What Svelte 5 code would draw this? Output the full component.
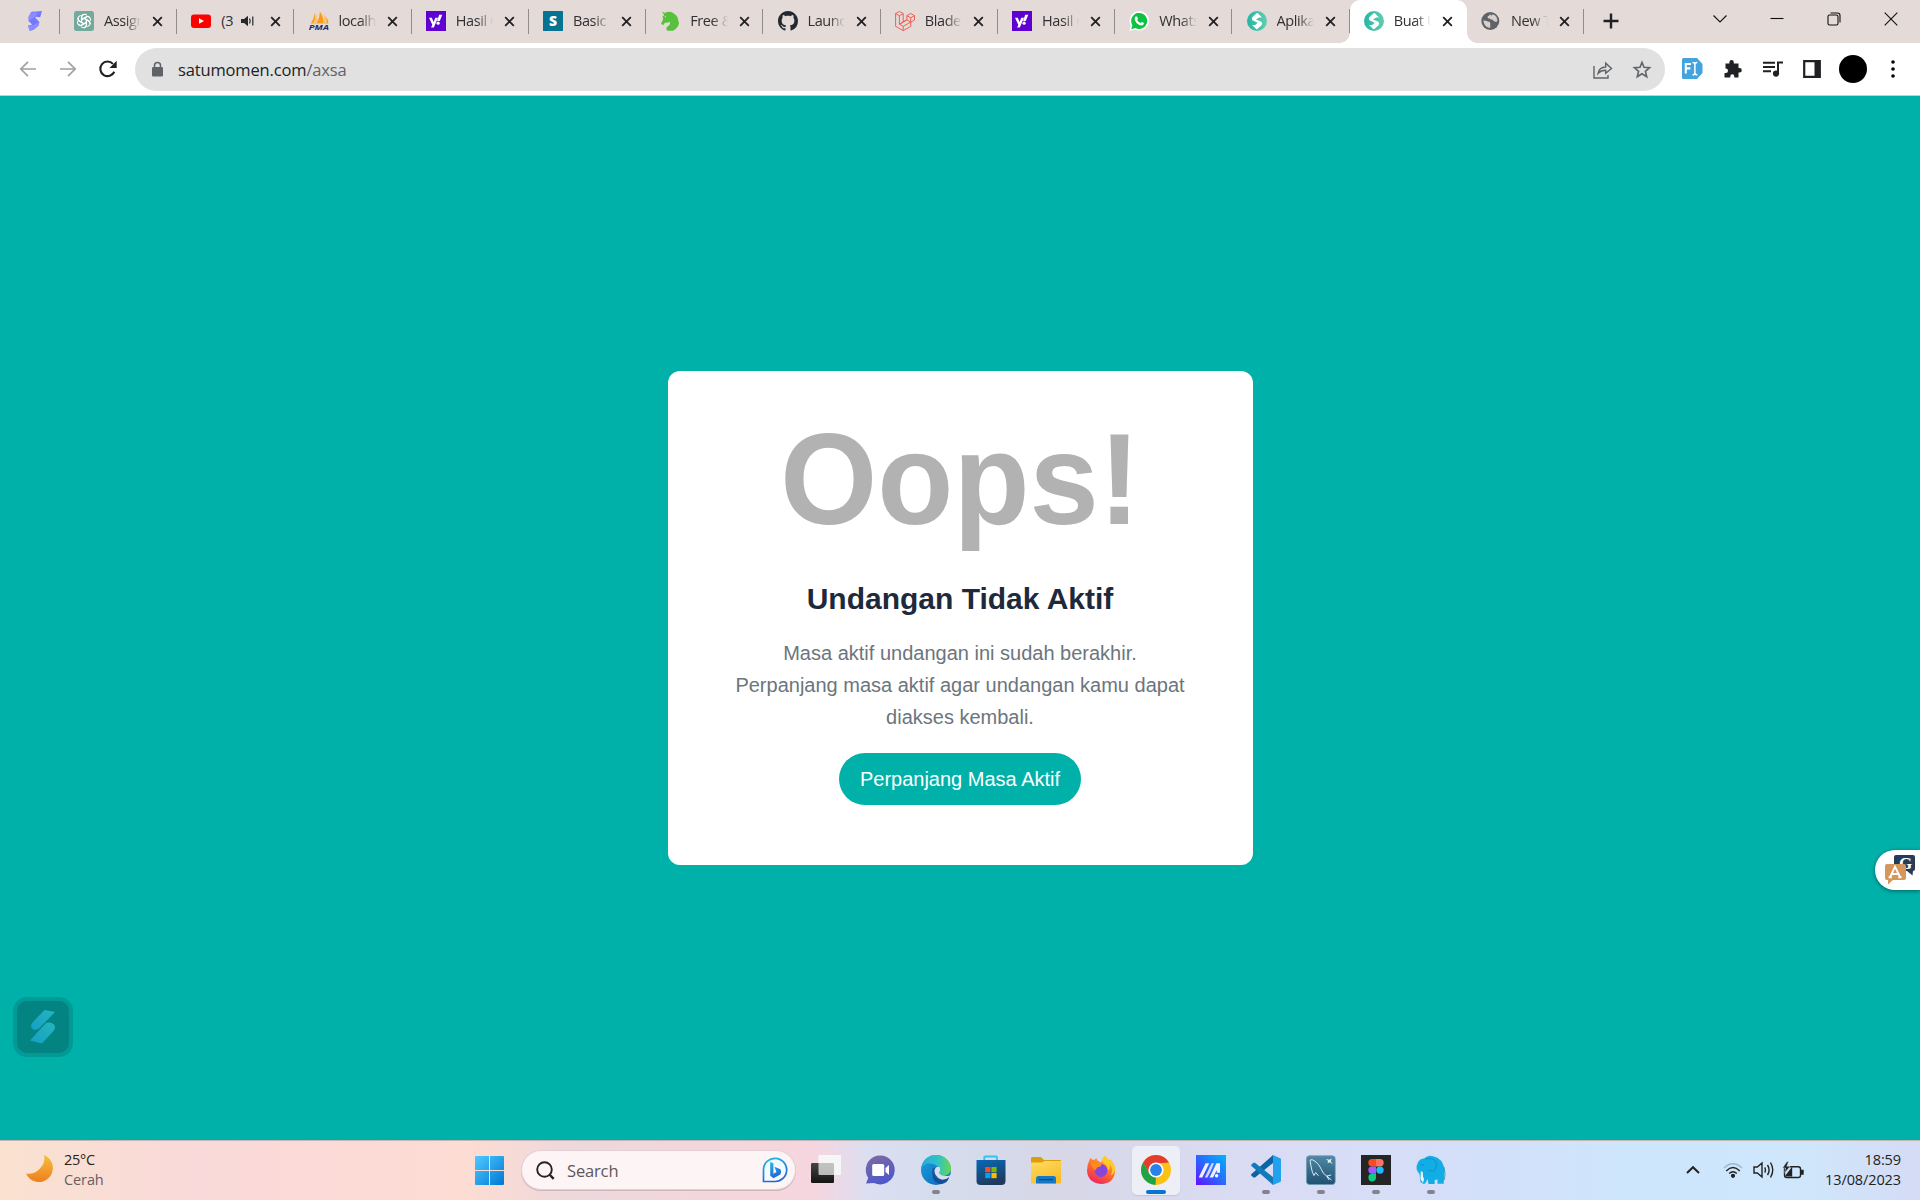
<script>
  const tabs = [
    { icon: 'gpt', title: 'Assignment' },
    { icon: 'youtube', title: '(3)', audio: true },
    { icon: 'pma', title: 'localhost' },
    { icon: 'yahoo', title: 'Hasil Cari' },
    { icon: 'sbasic', title: 'Basic ' },
    { icon: 'horse', title: 'Free & Open' },
    { icon: 'github', title: 'Launching' },
    { icon: 'laravel', title: 'Blade T' },
    { icon: 'yahoo', title: 'Hasil Cari' },
    { icon: 'whatsapp', title: 'WhatsApp' },
    { icon: 'momen', title: 'Aplikasi' },
    { icon: 'momen', title: 'Buat Undangan', active: true },
    { icon: 'globe', title: 'New Tab' }
  ];

  const apps = [
    { icon: 'taskview' },
    { icon: 'chat' },
    { icon: 'edge', running: true },
    { icon: 'store' },
    { icon: 'explorer' },
    { icon: 'firefox' },
    { icon: 'chrome', focused: true },
    { icon: 'msi' },
    { icon: 'vscode', running: true },
    { icon: 'mysql', running: true },
    { icon: 'figma', running: true },
    { icon: 'laragon', running: true }
  ];
</script>

{#snippet favicon(name)}
  <svg class="fav" viewBox="0 0 20 20">
    {#if name === 'gpt'}
      <rect width="20" height="20" rx="2.5" fill="#74aa9c" />
      <g fill="none" stroke="#fff" stroke-width="1.1">
        {#each [0, 60, 120, 180, 240, 300] as a}
          <path transform="rotate({a} 10 10)" d="M7.7 11.3V6.1Q7.7 3.3 10.4 3.2 12 3.2 13.1 4.5M7.7 8.4 12 5.9Q14.2 4.9 15.7 6.8" />
        {/each}
      </g>
    {:else if name === 'youtube'}
      <rect y="3.4" width="20" height="13.6" rx="3" fill="#f00" />
      <path d="M8 7.2v5.6l5-2.8z" fill="#fff" />
    {:else if name === 'pma'}
      <path d="M1.8 12.5Q5 8 5.8 2Q7 8 6.8 12.5zM7.5 12.5Q11 6 10.8 0.5Q15 6 14.6 12.5zM15 12.5Q16 8 15 4.5Q19.5 8 19.4 12.5z" fill="#f89c1c" />
      <path d="M4 12.5Q7 7 7.4 1.3Q8.4 7 8 12.5zM15.3 12.5Q15.5 6 14 1.8Q18 7 18 12.5z" fill="#fbc477" />
      <text x="-.2" y="19.2" textLength="20" lengthAdjust="spacingAndGlyphs" font-size="7.4" font-weight="700" font-style="italic" fill="#292d64">PMA</text>
    {:else if name === 'yahoo'}
      <rect width="20" height="20" fill="#5f01d1" />
      <path d="M3 6.8h2.8l1.8 4.1 1.7-4.1h2.7L7.8 16.5H5.1l1.2-2.7zM13.2 3.8h3.1l-2.5 6.1h-2.7z" fill="#fff" />
      <circle cx="12.1" cy="12.2" r="1.6" fill="#fff" />
    {:else if name === 'sbasic'}
      <rect width="20" height="20" rx=".6" fill="#057391" />
      <text x="10" y="15" text-anchor="middle" font-size="14" font-weight="800" fill="#fff">S</text>
    {:else if name === 'horse'}
      <path d="M2 .5 4.8 2Q9-.5 13.5 2.2 18 4.8 18.2 9.5L19 12Q18.5 17 13 19.8L7.5 19.8Q4.5 17 9 14.5 10.5 13.5 9.7 10.5 7.5 12.5 5.2 11.5L3 14.2 1 12.5 3.2 8.5 2.5 5.5 4.2 4.2z" fill="#58c13c" />
      <path d="M4.3 5.8l2-.8-.7 1.5z" fill="#e4dad8" />
    {:else if name === 'github'}
      <path transform="scale(1.25)" fill="#24292f" d="M8 0C3.58 0 0 3.58 0 8c0 3.54 2.29 6.53 5.47 7.59.4.07.55-.17.55-.38 0-.19-.01-.82-.01-1.49-2.01.37-2.53-.49-2.69-.94-.09-.23-.48-.94-.82-1.13-.28-.15-.68-.52-.01-.53.63-.01 1.08.58 1.23.82.72 1.21 1.87.87 2.33.66.07-.52.28-.87.51-1.07-1.78-.2-3.64-.89-3.64-3.95 0-.87.31-1.59.82-2.15-.08-.2-.36-1.02.08-2.12 0 0 .67-.21 2.2.82.64-.18 1.32-.27 2-.27s1.36.09 2 .27c1.53-1.04 2.2-.82 2.2-.82.44 1.1.16 1.92.08 2.12.51.56.82 1.27.82 2.15 0 3.07-1.87 3.75-3.65 3.95.29.25.54.73.54 1.48 0 1.07-.01 1.93-.01 2.2 0 .21.15.46.55.38A8.01 8.01 0 0 0 16 8c0-4.42-3.58-8-8-8z" />
    {:else if name === 'laravel'}
      <path fill="none" stroke="#ef5248" stroke-width=".9" stroke-linejoin="round" d="M.6 2.6 4.4.5 8.2 2.6V11l3.7-2.2V4.6l3.8-2.1 3.8 2.1V9l-3.7 2.2v4.2L8.2 19.6.6 15.3zM.6 2.6l3.8 2.2 3.8-2.2M4.4 4.8v8.4L8.2 11M4.4 13.2l3.8 2.1v4.3M8.2 15.3l7.6-4.2-3.9-2.3M4.4 13.2l7.5-4.4M11.9 4.6l3.8 2.2 3.8-2.2M15.7 6.8v4.3" />
    {:else if name === 'whatsapp'}
      <path d="M.3 20 1.8 14.6A9.7 9.7 0 1 1 6 18.6z" fill="#fff" />
      <path d="M2.2 18.2 3.4 14.2A8 8 0 1 1 6.4 17z" fill="#0dc143" />
      <path d="M6.5 5.5 8 5.4 9 7.8 8.2 9Q9.4 11.3 11.7 12L12.8 10.9 15 12Q14.8 14.6 12.3 14.6 8.3 14 6 9.5 5.1 7 6.5 5.5z" fill="#fff" />
    {:else if name === 'momen'}
      <circle cx="10" cy="10" r="10" fill="url(#momenBg)" />
      <path d="M10.3 1.8 15 6.4H12.2L9 8.6 14.4 10.8Q16 12.4 14.6 14.2L9.8 18.4 5 13.9H8.2L10.8 11.7 5.4 9.2Q4.1 7.5 5.5 6z" fill="#fff" />
    {:else if name === 'globe'}
      <circle cx="9.3" cy="10" r="9" fill="#5f6368" />
      <path d="M2.2 9.5Q5 9.5 7 10.6 9.6 11 9.2 13L9.2 17Q3.4 16.4 2.2 9.5zM9.2 3Q8.4 4.6 6.6 5.6 6.2 7.6 8.6 7.6 9.8 8.8 11.8 8.8 12.6 10.6 14.6 10.8L16.3 10.4Q16.6 4.6 11.6 3.2 11.6 4.6 9.9 4.6z" fill="#d8cfce" />
    {/if}
  </svg>
{/snippet}

{#snippet appIcon(name)}
  <svg class="app-svg" viewBox="0 0 30 30">
    {#if name === 'taskview'}
      <rect y="8" x="0" width="23" height="20" rx="1.2" fill="url(#dark)" />
      <rect x="7.5" y="0" width="22.5" height="20" rx="1.2" fill="#f4f5f5" opacity=".72" />
      <path d="M23 0H29Q30 0 30 1V19Q30 20 29 20H23zM8.5 0H23V8H7.5V1Q7.5 0 8.5 0z" fill="#f7f7f7" opacity=".8" />
    {:else if name === 'chat'}
      <path d="M0 28.5 2.2 23A14.5 14.5 0 1 1 8 28z" fill="url(#chatBg)" />
      <rect x="6.2" y="9" width="12" height="12" rx="1.5" fill="#fff" />
      <path d="M19.5 13 23 10V20L19.5 17z" fill="#fff" />
    {:else if name === 'edge'}
      <circle cx="15" cy="15" r="15" fill="url(#edgeBlue)" />
      <path d="M.2 14C1 5.5 7 0 15 0 24 0 30 6.5 30 13.5 30 19 25.5 21 22 21 18 21 17.3 19.3 18.7 17.7 20 13 15 8.5 8.5 8.5 4 8.5 1.2 11 .2 14z" fill="url(#edgeGreen)" />
      <path d="M12 13Q8.5 22 17.5 26.5 24 28.5 28.2 23 19 26.2 15.5 20.8 12.5 17 15 12.8z" fill="#1456a0" />
      <path d="M18.7 12.2Q20 15 18.2 18 20 22 28 20.7 31 19 27.6 23.5 20 27 15.5 21 11.5 16 15 12.5 17 11 18.7 12.2z" fill="#d9ddeb" />
      <path d="M13 19Q14 25.5 21.5 25 26 24.5 28 22 27 28 20 29.3 13 27.5 11.5 22z" fill="#124f9a" />
    {:else if name === 'store'}
      <path d="M8.3 6V2.4Q8.3 1.5 9.2 1.5H20Q21 1.5 21 2.4V6" fill="none" stroke="#35c1f1" stroke-width="1.8" />
      <path d="M.5 5H29.5V26Q29.5 30 25.5 30H4.5Q.5 30 .5 26z" fill="url(#storeBg)" />
      <path d="M9.2 12h5.2v5.2H9.2z" fill="#f25022" /><path d="M15.4 12h5.2v5.2h-5.2z" fill="#7fba00" />
      <path d="M9.2 18h5.2v5.2H9.2z" fill="#00a4ef" /><path d="M15.4 18h5.2v5.2h-5.2z" fill="#ffb900" />
    {:else if name === 'explorer'}
      <path d="M0 3.2Q0 2 1.2 2H10L13 5H29Q30 5 30 6V12H0z" fill="#dc9d0d" />
      <path d="M0 7.5H11L13.5 6H30V27.5Q30 28.5 29 28.5H1Q0 28.5 0 27.5z" fill="url(#folder)" />
      <path d="M5 28.5V23.5Q5 21 7.5 21H22.5Q25 21 25 23.5V28.5z" fill="#147ac6" />
      <path d="M8 24.2h14v1H8z" fill="#083b6d" />
    {:else if name === 'firefox'}
      <path d="M3.3 5.5 4.3 3.1 6.8 5.1 9 4.6 10.2 2.9 11.3 5.3 14.7 7.5Q16.5 6.4 16.4 4L19.2.5Q19.4 4 22.3 6L24.4 4.2Q25 6 27.1 8 29.5 12 28.9 17.5 27.5 28.5 15 29 2 27.8 1 16 .9 10 3.3 5.5z" fill="url(#fox)" />
      <circle cx="15" cy="15.5" r="6.4" fill="#8745de" />
      <path d="M4.6 7.2Q9 6 11.8 8.5L15.5 9.2Q15 12 11.5 12.2L9.5 15Q10 15.8 10.5 16 6 14 4.6 7.2z" fill="#ff8a21" />
      <path d="M19.2.5Q14.7 4.5 17 8 22 10 22 15.5 25 13 23.5 8.8 28 14 24.8 20.5 31 17 28.3 10 26 7.5 24.4 4.2L23.8 6.3z" fill="#ffcb2b" />
    {:else if name === 'chrome'}
      <circle cx="15" cy="15" r="15" fill="#fbc216" />
      <path d="M2 7.5A15 15 0 0 1 28 7.5L15 8.5 8.5 18.7z" fill="#e33b2e" />
      <path d="M2 7.5 8.6 18.8 15 22.3 14.5 30A15 15 0 0 1 2 7.5z" fill="#1ea446" />
      <path d="M15 30 22 18.5 15 22z" fill="#fbc216" />
      <circle cx="15" cy="15" r="7.6" fill="#fff" /><circle cx="15" cy="15" r="5.9" fill="#2783eb" />
    {:else if name === 'msi'}
      <path d="M0 0h30v30H0z" fill="url(#msiBg)" />
      <path d="M2.7 22.5 9.6 8.3h3.6L6.3 22.5z" fill="#f1efff" />
      <path d="M8.8 22.5 15.6 8.3H18L14.9 15.8 11.4 22.5z" fill="#d5d4ff" />
      <path d="M13.6 22.5 20.4 8.3H24V17.8H20.8V15L17 22.5z" fill="#f1efff" />
      <circle cx="20.6" cy="20.8" r="1.7" fill="#fff" />
    {:else if name === 'vscode'}
      <path d="M22 0V8L4 22.5H2.5L.2 20.6V19.3z" fill="#0b65a4" />
      <path d="M.2 9.8 2.5 7.8H4L22 22V30L.2 10.8z" fill="#1379bd" />
      <path d="M22 0 29.2 3.2Q30 3.6 30 4.5V25.5Q30 26.5 29.2 26.9L22 30z" fill="#22a1ee" />
    {:else if name === 'mysql'}
      <rect x=".5" y=".8" width="28.7" height="28.7" rx="3" fill="url(#sqlBg)" stroke="#6b98b4" stroke-width=".8" />
      <path d="M8 20.5 6.4 17.2Q5 12 4.2 6.5 3.3 4.3 6.2 4.7 12 7 15.4 14.5 16.6 18.5 20.7 21L25.5 25M8 20.5 9.7 17.5 12.5 20.8M20.7 21 25.2 20M20.7 21 23 25" fill="none" stroke="#e3edf3" stroke-width=".95" />
      <path d="M20 3.8 23 4.8 25.8 3.6 24.7 6.2 27 9.2 23.8 7.3 21.6 8.2 22 6z" fill="#e3edf3" />
    {:else if name === 'figma'}
      <path d="M0 0h30v30H0z" fill="#252525" />
      <path d="M15 4h-4a3.7 3.7 0 0 0 0 7.4h4z" fill="#f24e1e" /><path d="M15 4h4a3.7 3.7 0 0 1 0 7.4h-4z" fill="#ff7262" />
      <path d="M15 11.4h-4a3.7 3.7 0 0 0 0 7.4h4z" fill="#a259ff" /><circle cx="19" cy="15.1" r="3.7" fill="#1abcfe" />
      <path d="M11 18.8h4v3.8a3.8 3.8 0 1 1-4-3.8z" fill="#0acf83" />
    {:else if name === 'laragon'}
      <path d="M8.5 3.2Q12-.5 17 1.2 27 3 28.5 15L27.7 28.7H21.5V24.5L18.7 25V29H12.5L11.5 24 9 28.7H7L4.5 27 3.5 19Q-1.5 14 2 7.2 3.7 3.8 8.5 3.2z" fill="#12ade5" />
      <path d="M9.5 3.7Q22 1.8 20.2 12.5 18.8 18 12 15.2M28 12Q30 20 28.3 25M4.2 10.3Q5.8 8.8 8.5 10.5" fill="none" stroke="#0788b9" stroke-width=".7" />
      <path d="M4.8 16.2 6.8 17 7 21.5 8 24.2 7 28 4.5 24z" fill="#edf6fa" />
    {/if}
  </svg>
{/snippet}

{#snippet closeX()}
  <svg class="tab-x" viewBox="0 0 12 12"><path d="M1.3 1.3 10.7 10.7M10.7 1.3 1.3 10.7" /></svg>
{/snippet}

<svg class="defs" aria-hidden="true">
  <defs>
    <linearGradient id="momenBg"><stop stop-color="#25b6a4" /><stop offset="1" stop-color="#62cdb1" /></linearGradient>
    <linearGradient id="dark" x2="0" y2="1"><stop stop-color="#45443e" /><stop offset="1" stop-color="#151515" /></linearGradient>
    <linearGradient id="chatBg" x2=".4" y2="1"><stop stop-color="#806b9f" /><stop offset="1" stop-color="#5059ca" /></linearGradient>
    <linearGradient id="edgeBlue" x2="1" y2="1"><stop stop-color="#1e9ee0" /><stop offset="1" stop-color="#0867b8" /></linearGradient>
    <linearGradient id="edgeGreen"><stop stop-color="#28a9dd" /><stop offset=".55" stop-color="#2fc3c7" /><stop offset="1" stop-color="#69d64c" /></linearGradient>
    <linearGradient id="storeBg" x2=".3" y2="1"><stop stop-color="#0669b8" /><stop offset="1" stop-color="#203a5e" /></linearGradient>
    <linearGradient id="folder" x2=".5" y2="1"><stop stop-color="#ffdc63" /><stop offset="1" stop-color="#f9bd2a" /></linearGradient>
    <linearGradient id="fox" x1=".8" x2=".3" y2="1"><stop stop-color="#ffbd2e" /><stop offset=".5" stop-color="#ff6f2c" /><stop offset="1" stop-color="#ed2360" /></linearGradient>
    <linearGradient id="msiBg" y1="1" y2="0"><stop stop-color="#6410ff" /><stop offset=".5" stop-color="#286bff" /><stop offset="1" stop-color="#00b5fb" /></linearGradient>
    <linearGradient id="sqlBg" x2="0" y2="1"><stop stop-color="#4f89a6" /><stop offset="1" stop-color="#205172" /></linearGradient>
    <linearGradient id="winBg" x2="1" y2="1"><stop stop-color="#4fcaff" /><stop offset="1" stop-color="#0078d4" /></linearGradient>
    <linearGradient id="bing" x2=".3" y2="1"><stop stop-color="#22b9ec" /><stop offset="1" stop-color="#2765d5" /></linearGradient>
    <linearGradient id="moon" x2="0" y2="1"><stop stop-color="#f4c13b" /><stop offset="1" stop-color="#ef7e20" /></linearGradient>
    <linearGradient id="badgeS" x1="1" x2="0" y2="1"><stop stop-color="#25b5bd" /><stop offset="1" stop-color="#149fc5" /></linearGradient>
  </defs>
</svg>

<div class="screen">
  <header class="tabstrip">
    <div class="pinned">
      <svg width="16" height="20" viewBox="0 0 16 20"><path d="M4 1.2Q5 .2 7 .8L15 0 13.2 6.2 8 5.8 9 7.5 12.5 11 11.3 15 6.6 18.8 2.8 20 1 14.8 5.2 13.5 1.7 10.2 1.5 6z" fill="#7578ff" /><path d="M4 1.2 11 2 8 5.8 1.7 10.2 1.5 6zM7 14 12 10.5 11.3 15 2.8 20 1 14.8z" fill="#9294ff" opacity=".75" /></svg>
    </div>
    {#each tabs as tab}
      <div class="tab" class:active={tab.active} class:audio={tab.audio}>
        {@render favicon(tab.icon)}
        <span class="title">{tab.title}</span>
        {#if tab.audio}
          <svg class="sound" viewBox="0 0 13 12"><path d="M0 4h3L7 .8v10.4L3 8H0z" fill="#26282b" /><path d="M8.5 3.5Q10 6 8.5 8.5M11.8 1.5V10.5" fill="none" stroke="#26282b" stroke-width="1.2" /></svg>
        {/if}
        {@render closeX()}
      </div>
    {/each}
    <div class="newtab"><svg width="16" height="16" viewBox="0 0 16 16"><path d="M8 .5v15M.5 8h15" stroke="#202124" stroke-width="2.4" /></svg></div>
    <div class="winctl">
      <svg width="14" height="14" viewBox="0 0 14 14"><path d="M.5 3.5 7 10 13.5 3.5" /></svg>
      <svg width="14" height="14" viewBox="0 0 14 14"><path d="M.5 6.5h13" /></svg>
      <svg width="14" height="14" viewBox="0 0 14 14"><rect x="1" y="3" width="10" height="10" rx="1.5" /><path d="M3.5 1H10.5Q13 1 13 3.5V10.5" /></svg>
      <svg width="14" height="14" viewBox="0 0 14 14"><path d="M.7.7 13.3 13.3M13.3.7.7 13.3" /></svg>
    </div>
  </header>

  <div class="toolbar">
    <div class="nav">
      <svg class="muted" width="18" height="18" viewBox="0 0 18 18"><path d="M17 9H2M9 1.8 1.8 9 9 16.2" /></svg>
      <svg class="muted" width="18" height="18" viewBox="0 0 18 18"><path d="M1 9H16M9 1.8 16.2 9 9 16.2" /></svg>
      <svg class="reload" width="18" height="18" viewBox="0 0 18 18"><path d="M15.3 11.8A7.3 7.3 0 1 1 14 3.9" /><path d="M17.7.8V8H10.5z" /></svg>
    </div>
    <div class="omnibox">
      <svg width="11" height="15" viewBox="0 0 11 15"><rect y="5" width="11" height="9.5" rx="1.3" fill="#5f6368" /><path d="M2.5 6V3.6a3 3 0 0 1 6 0V6" fill="none" stroke="#5f6368" stroke-width="1.5" /></svg>
      <span class="url"><b>satumomen.com</b>/axsa</span>
      <svg class="share" width="20" height="18" viewBox="0 0 20 18"><path d="M1 5V17H15V14M5 12.5Q6 6.3 12.7 6V2.2L18.5 7.5 12.7 12.2V9.3Q8 9.2 5 12.5z" /></svg>
      <svg class="star" width="18" height="17" viewBox="0 0 18 17"><path d="M9 1.3 11 6.2 16.6 6.7 12.4 10.3 13.7 15.7 9 12.8 4.3 15.7 5.6 10.3 1.4 6.7 7 6.2z" /></svg>
    </div>
    <div class="exts">
      <svg width="21" height="21" viewBox="0 0 21 21"><path d="M1.5 0H15L20.5 6V15L15 21H1.5Q0 21 0 19.5V1.5Q0 0 1.5 0z" fill="#43a3df" /><path d="M3.8 15.5V6H9M3.8 10.4H8.4" fill="none" stroke="#fff" stroke-width="2.1" /><path d="M10.5 4.5Q12.9 4.5 12.9 6V15Q12.9 16.8 10.5 16.8M15.4 4.5Q12.9 4.5 12.9 6M12.9 15Q12.9 16.8 15.4 16.8" fill="none" stroke="#fff" stroke-width="1.5" /></svg>
      <svg width="18" height="18" viewBox="0 0 18 18"><path d="M1.5 3.5H5.4V2.3a2.2 2.2 0 0 1 4.4 0V3.5H14.5V8H15.6a2.2 2.2 0 0 1 0 4.4H14.5V17.5H10.3V16.2a2 2 0 0 0-4 0V17.5H.5V13H1.7a2.3 2.3 0 0 0 0-4.6H1.5z" fill="#202124" /></svg>
      <svg width="20" height="16" viewBox="0 0 20 16"><path d="M0 1.8H12M0 6H12M0 10.2H8M15 12.5V1.5H20" fill="none" stroke="#202124" stroke-width="2" /><circle cx="13" cy="12.6" r="3.1" fill="#202124" /></svg>
      <svg width="18" height="18" viewBox="0 0 18 18"><path d="M1.2 1.2H16.8V16.8H1.2z" fill="none" stroke="#202124" stroke-width="2.2" /><path d="M11.5 1H17v16h-5.5z" fill="#202124" /></svg>
      <span class="avatar"></span>
      <svg width="4" height="18" viewBox="0 0 4 18"><circle cx="2" cy="2" r="1.8" /><circle cx="2" cy="9" r="1.8" /><circle cx="2" cy="16" r="1.8" /></svg>
    </div>
  </div>

  <main class="page">
    <section class="card">
      <h1>Oops!</h1>
      <h2>Undangan Tidak Aktif</h2>
      <p>Masa aktif undangan ini sudah berakhir.<br />Perpanjang masa aktif agar undangan kamu dapat<br />diakses kembali.</p>
      <button>Perpanjang Masa Aktif</button>
    </section>
    <div class="translate">
      <svg width="31" height="30" viewBox="0 0 31 30">
        <path d="M11 0H28Q30 0 30 2V14Q30 16 28 16L27.5 20.5 22 16H11Q9 16 9 14V2Q9 0 11 0z" fill="#263c57" />
        <text x="20.5" y="13.5" text-anchor="middle" font-size="17" font-weight="700" fill="#fff" font-family="Liberation Serif, serif">G</text>
        <path d="M2 9H19Q21 9 21 11V23Q21 25 19 25H8L3 29.5V25H2Q0 25 0 23V11Q0 9 2 9z" fill="#d6965c" />
        <path d="M5 22.3 10 11.7 15.2 22.3M6.5 19H13.8M3.6 22.3H6.8M13.3 22.3H16.6" fill="none" stroke="#fff" stroke-width="1.9" />
      </svg>
    </div>
    <div class="badge">
      <svg width="26" height="34" viewBox="0 0 26 34"><path d="M14.5 0 25 2 9 18.5Q4 21.5 1.7 18 0 14.5 3 12z" fill="url(#badgeS)" /><path d="M15.5 13.5Q20 11 24 14.5 26.5 18 23 21.5L12 33.5 0 30.5z" fill="url(#badgeS)" /></svg>
    </div>
  </main>

  <footer class="taskbar">
    <div class="weather">
      <svg width="28" height="28" viewBox="0 0 28 28"><path d="M18 0A14 14 0 1 1 0 18.5Q7 20 13 14.5 20 8 18 0z" fill="url(#moon)" /></svg>
      <div><span>25°C</span><span class="cond">Cerah</span></div>
    </div>
    <svg class="start" viewBox="0 0 29 29"><path d="M1 0H14V14H0V1Q0 0 1 0zM15 0H28Q29 0 29 1V14H15zM0 15H14V29H1Q0 29 0 28zM15 15H29V28Q29 29 28 29H15z" fill="url(#winBg)" /></svg>
    <div class="search">
      <svg width="19" height="19" viewBox="0 0 19 19"><circle cx="8.5" cy="8.5" r="7.3" fill="none" stroke="#242424" stroke-width="1.9" /><path d="M13.5 13.5 17.7 17.8" stroke="#242424" stroke-width="2.4" /></svg>
      <span>Search</span>
      <svg width="26" height="26" viewBox="0 0 26 26"><path d="M1.5 24.5V12.5A11.6 11.6 0 1 1 13 24.5z" fill="#f4fbff" stroke="url(#bing)" stroke-width="1.7" /><path d="M8.2 5 11.4 6.3V16.8L14.5 15 12.4 9.8 18 12Q20 14 18.3 17.4L11.5 21.2 8.2 18.7z" fill="url(#bing)" /></svg>
    </div>
    <nav class="apps">
      {#each apps as app}
        <div class="app" class:running={app.running} class:focused={app.focused}>{@render appIcon(app.icon)}</div>
      {/each}
    </nav>
    <div class="tray">
      <svg class="chev" width="14" height="8" viewBox="0 0 14 8"><path d="M1 7 7 1.2 13 7" /></svg>
      <svg class="wifi" width="20" height="15" viewBox="0 0 20 15"><path d="M1 5Q10-3.5 19 5" opacity=".25" /><path d="M3.2 8Q10 1.2 16.8 8M6.2 10.6Q10 6.8 13.8 10.6" /><circle cx="10" cy="12.8" r="1.4" fill="#222" /></svg>
      <svg class="vol" width="21" height="18" viewBox="0 0 21 18"><path d="M1 6H4.3L9 2V16L4.3 12H1zM11.8 6.3Q13.3 9 11.8 11.7M14.5 4Q17.7 9 14.5 14M17.5 1.5Q22 9 17.5 16.5" /></svg>
      <svg class="batt" width="21" height="17" viewBox="0 0 21 17"><rect x="1.5" y="4.7" width="16" height="10.8" rx="2.2" /><path d="M18.5 8.5H20V12H18.5z" fill="#222" /><path d="M3 13.8 8.5 6.5V13.8z" fill="#222" /><path d="M4-.5-.5 6H2.5L1.8 11 7 4.5H3.8L5.5-.5z" fill="#222" stroke="#d0e6fb" stroke-width=".5" /></svg>
      <div class="clock"><span>18:59</span><span>13/08/2023</span></div>
    </div>
  </footer>
</div>

<style>
  :global(body) { margin: 0; overflow: hidden; }
  .defs { position: absolute; width: 0; height: 0; }
  .screen { width: 1920px; height: 1200px; display: flex; flex-direction: column; font-family: "Open Sans", "Noto Sans", sans-serif; overflow: hidden; }
  svg { display: block; flex: none; overflow: visible; }

  .tabstrip { height: 43px; background: #e4dad8; display: flex; flex: none; }
  .pinned { width: 60px; flex: none; box-sizing: border-box; padding: 11px 0 0 27px; background: linear-gradient(#918b89, #918b89) 59px 9px / 1px 25px no-repeat; }
  .tab { width: 117.25px; height: 43px; flex: none; box-sizing: border-box; display: flex; align-items: flex-start; padding: 11px 14px 0 14px; background: linear-gradient(#918b89, #918b89) 116.2px 9px / 1px 25px no-repeat; }
  .fav { width: 20px; height: 20px; }
  .title { flex: 1; min-width: 0; margin-left: 10px; height: 22px; line-height: 20px; font-size: 14.5px; letter-spacing: -.4px; color: #303033; white-space: nowrap; overflow: hidden; -webkit-mask: linear-gradient(90deg, #000 calc(100% - 16px), transparent); mask: linear-gradient(90deg, #000 calc(100% - 16px), transparent); }
  .tab-x { width: 11px; height: 11px; margin: 5px 0 0 11px; }
  .tab-x path { stroke: #202124; stroke-width: 2; }
  .audio .title { -webkit-mask: none; mask: none; flex: 0 0 12px; }
  .sound { width: 13px; height: 12px; margin: 4px 0 0 8px; }
  .audio .tab-x { margin-left: auto; }
  .tab.active { background: #fff; border-radius: 10px 10px 0 0; position: relative; }
  .tab.active::before, .tab.active::after { content: ""; position: absolute; bottom: 0; width: 10px; height: 10px; }
  .tab.active::before { left: -10px; background: radial-gradient(circle at 0 0, #e4dad8 9.5px, #fff 10px); }
  .tab.active::after { right: -10px; background: radial-gradient(circle at 100% 0, #e4dad8 9.5px, #fff 10px); }
  .newtab { padding: 13px 0 0 19px; }
  .winctl { margin-left: auto; display: flex; gap: 43px; padding: 12px 22px 0 0; }
  .winctl path, .winctl rect { fill: none; stroke: #111; stroke-width: 1.1; }

  .toolbar { height: 52px; flex: none; background: #fff; border-bottom: 1px solid #c4d0cf; display: flex; align-items: flex-start; }
  .nav { width: 135px; box-sizing: border-box; padding: 17px 0 0 19px; display: flex; gap: 22px; }
  .nav path { fill: none; stroke: #202124; stroke-width: 2.1; }
  .nav .muted path { stroke: #a0a0a0; stroke-width: 1.7; }
  .nav .reload path:last-child { fill: #202124; stroke: none; }
  .omnibox { width: 1530px; height: 43px; margin-top: 5px; box-sizing: border-box; border-radius: 22px; background: #e1e1e1; display: flex; align-items: center; padding: 0 14px 0 17px; }
  .url { margin-left: 15px; font-size: 16.5px; line-height: 24px; flex: 1; color: #606367; letter-spacing: -.15px; }
  .url b { font-weight: 400; color: #202124; }
  .share, .star { fill: none; stroke: #606368; stroke-width: 1.4; }
  .star { margin-left: 20px; stroke-width: 1.6; }
  .exts { flex: 1; height: 51px; display: flex; align-items: center; padding: 0 0 0 17px; }
  .exts > :nth-child(2) { margin-left: 21px; }
  .exts > :nth-child(3) { margin-left: 21px; }
  .exts > :nth-child(4) { margin-left: 20px; }
  .avatar { width: 28px; height: 28px; background: #000; border-radius: 50%; margin: 0 24px 0 18px; }

  .page { flex: 1; background: #00b1aa; position: relative; display: flex; justify-content: center; align-items: flex-start; padding-top: 275px; font-family: "Liberation Sans", Arial, sans-serif; }
  .card { width: 585px; height: 494px; background: #fff; border-radius: 12px; box-sizing: border-box; display: flex; flex-direction: column; align-items: center; text-align: center; padding: 48px 1px 0 0; margin-left: 1px; }
  h1 { margin: 0; font-size: 129px; line-height: 120px; color: #b2b2b2; transform: scaleX(.966); }
  h2 { margin: 39px 0 0; font-size: 30px; line-height: 42px; color: #1e293b; }
  p { margin: 17px 0 0; font-size: 20px; line-height: 32px; color: #6c757d; }
  button { margin: 20px 0 0; width: 242px; height: 52px; padding: 0; border: 0; border-radius: 26px; background: #00b1aa; color: #fff; font: 20px "Liberation Sans", Arial, sans-serif; }
  .translate { position: absolute; right: 0; top: 754px; width: 45px; height: 40px; box-sizing: border-box; padding: 5px 0 0 10px; background: #fff; border-radius: 20px 0 0 20px; box-shadow: 0 1px 4px rgba(0, 0, 0, .45); }
  .badge { position: absolute; left: 13px; top: 901px; width: 60px; height: 60px; box-sizing: border-box; border: 4px solid #029a97; border-radius: 14px; background: #038482; display: flex; align-items: center; justify-content: center; }

  .taskbar { height: 60px; flex: none; box-sizing: border-box; border-top: 1px solid #c3b4b5; display: flex; align-items: flex-start; background: linear-gradient(90deg, #fae2d0 0, #f9d9d9 190px, #fbdad7 330px, #fcdcd3 470px, #edd8dc 580px, #f6d6dc 760px, #f5d6e0 815px, #dbdff1 870px, #d5dded 930px, #d7d7e7 1060px, #dadcf4 1260px, #d5def8 1430px, #cee6fc 1620px, #cfe6fb 1810px, #d5dbf5 1920px); }
  .weather { width: 475px; flex: none; box-sizing: border-box; padding: 9px 0 0 26px; display: flex; }
  .weather svg { margin-top: 5px; }
  .weather div { margin-left: 10px; display: flex; flex-direction: column; font-size: 14.5px; line-height: 20px; color: #222; letter-spacing: -.25px; }
  .weather .cond { color: #656060; letter-spacing: -.1px; }
  .start { width: 29px; height: 29px; margin-top: 15px; }
  .search { width: 273px; height: 38px; box-sizing: border-box; margin: 10px 0 0 18px; border-radius: 20px; background: #fcf4f5; box-shadow: 0 0 0 1px #e4d0d4, 0 1px 0 1px #cbb6ba; display: flex; align-items: center; padding: 0 7px 0 14px; }
  .search span { flex: 1; margin-left: 12px; font-size: 16.5px; color: #5c5859; letter-spacing: -.15px; }
  .apps { display: flex; margin: 5px 0 0 7px; gap: 7px; }
  .app { width: 48px; height: 49px; display: flex; flex-direction: column; align-items: center; border-radius: 5px; }
  .app-svg { width: 30px; height: 30px; margin-top: 9px; }
  .running::after, .focused::after { content: ""; width: 8px; height: 4px; border-radius: 2px; margin-top: 5px; background: #82838d; }
  .focused { background: #eeeef7; box-shadow: 0 1px 1px #c5c5d3; }
  .focused::after { width: 20px; background: #0875d1; }
  .tray { flex: 1; display: flex; justify-content: flex-end; align-items: center; height: 58px; padding-right: 19px; fill: none; stroke: #222; stroke-width: 1.4; }
  .chev { margin-right: 23px; stroke-width: 2; }
  .wifi { margin-right: 10px; }
  .vol { margin-right: 9px; }
  .clock { width: 97px; display: flex; flex-direction: column; text-align: right; font-size: 14.5px; line-height: 20px; letter-spacing: -.1px; color: #222; }
</style>
